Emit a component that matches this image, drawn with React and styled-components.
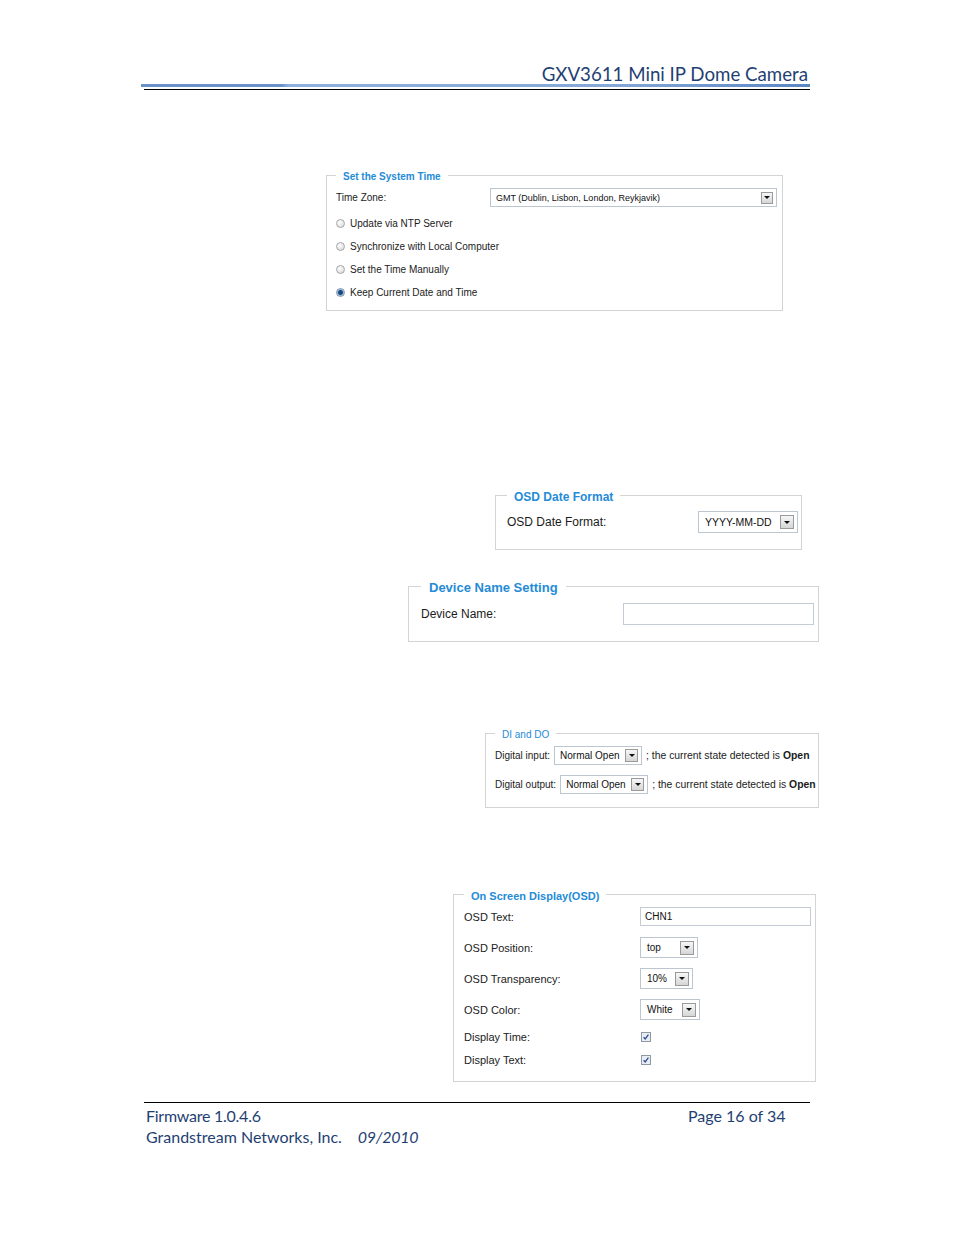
import React from 'react';
import styled, { createGlobalStyle, css } from 'styled-components';

const GlobalStyle = createGlobalStyle`
  html, body {
    margin: 0;
    padding: 0;
    background: #fff;
  }
  body {
    font-family: "Liberation Sans", Arial, sans-serif;
    color: #1b1b1b;
  }
`;

const Page = styled.div`
  width: 954px;
  height: 1235px;
  overflow: hidden;
  background: #fff;
`;

/* ---------- document header / footer ---------- */

const Header = styled.header`
  padding-top: 65px;
`;

const Title = styled.div`
  width: 808px;
  text-align: right;
  font-family: Lato, "Open Sans", sans-serif;
  font-size: 18.7px;
  line-height: 19px;
  color: #1f3f73;
`;

const BlueRule = styled.div`
  margin-left: 141px;
  width: 669px;
  height: 3px;
  background: linear-gradient(90deg, #6b92c7 0%, #6b92c7 21%, #8fb0da 22%, #86a8d6 70%, #5a86c2 100%);
`;

const BlackRule = styled.div`
  margin: 2px 0 0 144px;
  width: 666px;
  height: 1px;
  background: #000;
`;

const Footer = styled.footer`
  box-sizing: border-box;
  margin: 20px 0 0 144px;
  width: 666px;
  border-top: 1px solid #000;
  padding: 2px 0 0 2px;
  font-family: Lato, "Open Sans", sans-serif;
  font-size: 16px;
  line-height: 21px;
  color: #1f3f73;
`;

const FooterRow = styled.div`
  display: flex;
`;

const FooterCell = styled.span`
  width: ${p => p.$w}px;
  flex: none;
  letter-spacing: ${p => p.$ls || 0}px;
`;

const FooterDate = styled.em`
  margin-left: 16px;
  letter-spacing: -0.3px;
`;

/* ---------- settings panels ---------- */

const Panel = styled.fieldset`
  box-sizing: border-box;
  display: block;
  min-inline-size: 0;
  margin: ${p => p.$top}px 0 0 ${p => p.$left}px;
  width: ${p => p.$width}px;
  padding: 0 6px ${p => p.$padBottom}px ${p => p.$padLeft}px;
  border: 1px solid #d4d4d4;
`;

const Legend = styled.legend`
  padding: 0 ${p => p.$gap}px;
  font-size: ${p => p.$size}px;
  line-height: ${p => p.$lh}px;
  font-weight: ${p => (p.$bold ? 700 : 400)};
  color: #248bd7;

  span {
    display: inline-block;
    transform: translateY(2px);
  }
`;

const Row = styled.div`
  display: flex;
  align-items: center;
  height: ${p => p.$h}px;
  margin-top: ${p => p.$mt || 0}px;
  font-size: ${p => p.$size}px;
  white-space: nowrap;
`;

const Label = styled.span`
  flex: none;
  width: ${p => (p.$w ? `${p.$w}px` : 'auto')};
  margin-right: ${p => p.$mr || 0}px;
`;

const SelectBox = styled.div`
  box-sizing: border-box;
  flex: none;
  display: flex;
  align-items: center;
  justify-content: space-between;
  width: ${p => p.$w}px;
  height: ${p => p.$h}px;
  padding: 0 3px 0 ${p => p.$pl}px;
  border: 1px solid #bcc6d1;
  background: #fff;
  font-size: ${p => p.$size}px;
  color: #111;
`;

const ArrowButton = styled.span`
  box-sizing: border-box;
  flex: none;
  display: flex;
  align-items: center;
  justify-content: center;
  width: ${p => p.$s}px;
  height: ${p => p.$s}px;
  border: 1px solid #9a9a9a;
  background: linear-gradient(#f7f7f7, #d6d6d6);

  &::after {
    content: '';
    border-left: 3px solid transparent;
    border-right: 3px solid transparent;
    border-top: 3px solid #111;
  }
`;

const TextBox = styled.div`
  box-sizing: border-box;
  flex: none;
  display: flex;
  align-items: center;
  width: ${p => p.$w}px;
  height: ${p => p.$h}px;
  padding-left: 4px;
  border: 1px solid #c3ccd6;
  background: #fff;
  font-size: 10px;
  color: #111;
`;

const Radio = styled.span`
  box-sizing: border-box;
  flex: none;
  width: 9px;
  height: 9px;
  margin-right: 5px;
  border-radius: 50%;
  border: 1px solid #a8a8a8;
  background: radial-gradient(circle at 40% 35%, #ffffff, #d2d2d2);

  ${p =>
    p.$checked &&
    css`
      border-color: #7d97b3;
      background: radial-gradient(circle, #17497c 0 2px, #7fa2c6 2.6px, #e3ebf4 4px);
    `}
`;

const Status = styled.span`
  margin-left: 4px;
  font-size: 10.4px;

  b {
    font-weight: 700;
  }
`;

const Select = ({ w, h, pl = 5, size = 10, btn = 12, children }) => (
  <SelectBox $w={w} $h={h} $pl={pl} $size={size}>
    <span>{children}</span>
    <ArrowButton $s={btn} />
  </SelectBox>
);

const Check = () => (
  <svg width="10" height="10" viewBox="0 0 10 10" style={{ marginLeft: 1 }}>
    <rect x="0.5" y="0.5" width="9" height="9" fill="#e9edf2" stroke="#8e99a6" />
    <path d="M2.6 5.2 L4.2 7 L7.4 2.6" fill="none" stroke="#2c4f9a" strokeWidth="1.3" />
  </svg>
);

const RADIOS = [
  { label: 'Update via NTP Server' },
  { label: 'Synchronize with Local Computer' },
  { label: 'Set the Time Manually' },
  { label: 'Keep Current Date and Time', checked: true },
];

const OSD_ROWS = [
  { label: 'OSD Text:', text: 'CHN1', w: 171, h: 19 },
  { label: 'OSD Position:', select: 'top', w: 58, h: 21, pl: 6 },
  { label: 'OSD Transparency:', select: '10%', w: 53, h: 21, pl: 6 },
  { label: 'OSD Color:', select: 'White', w: 60, h: 21, pl: 6 },
];

export default function App() {
  return (
    <Page>
      <GlobalStyle />
      <Header>
        <Title>GXV3611 Mini IP Dome Camera</Title>
        <BlueRule />
        <BlackRule />
      </Header>

      <Panel $top={79} $left={326} $width={457} $padLeft={9} $padBottom={6}>
        <Legend $gap={7} $size={10} $lh={12} $bold><span>Set the System Time</span></Legend>
        <Row $h={19} $mt={7} $size={10}>
          <Label $w={154}>Time Zone:</Label>
          <Select w={287} h={19} size={9} btn={12}>GMT (Dublin, Lisbon, London, Reykjavik)</Select>
        </Row>
        <div style={{ marginTop: 5 }}>
          {RADIOS.map(r => (
            <Row key={r.label} $h={23} $size={10}>
              <Radio $checked={r.checked} />
              <Label>{r.label}</Label>
            </Row>
          ))}
        </div>
      </Panel>

      <Panel $top={177} $left={495} $width={307} $padLeft={11} $padBottom={16}>
        <Legend $gap={7} $size={12} $lh={14} $bold><span>OSD Date Format</span></Legend>
        <Row $h={22} $mt={9} $size={12}>
          <Label $w={191}>OSD Date Format:</Label>
          <Select w={100} h={22} pl={6} size={10.5} btn={14}>YYYY-MM-DD</Select>
        </Row>
      </Panel>

      <Panel $top={28} $left={408} $width={411} $padLeft={12} $padBottom={16}>
        <Legend $gap={8} $size={13} $lh={16} $bold><span>Device Name Setting</span></Legend>
        <Row $h={22} $mt={9} $size={12}>
          <Label $w={202}>Device Name:</Label>
          <TextBox $w={191} $h={22} />
        </Row>
      </Panel>

      <Panel $top={85} $left={485} $width={334} $padLeft={9} $padBottom={13}>
        <Legend $gap={7} $size={10} $lh={12}><span>DI and DO</span></Legend>
        <Row $h={19} $mt={7} $size={10}>
          <Label $mr={4}>Digital input:</Label>
          <Select w={88} h={19} pl={5} btn={13}>Normal Open</Select>
          <Status>; the current state detected is <b>Open</b></Status>
        </Row>
        <Row $h={19} $mt={10} $size={10}>
          <Label $mr={4}>Digital output:</Label>
          <Select w={88} h={19} pl={5} btn={13}>Normal Open</Select>
          <Status>; the current state detected is <b>Open</b></Status>
        </Row>
      </Panel>

      <Panel $top={80} $left={453} $width={363} $padLeft={10} $padBottom={10}>
        <Legend $gap={7} $size={11} $lh={13} $bold><span>On Screen Display(OSD)</span></Legend>
        {OSD_ROWS.map(r => (
          <Row key={r.label} $h={31} $size={11}>
            <Label $w={176}>{r.label}</Label>
            {r.text ? (
              <TextBox $w={r.w} $h={r.h}>{r.text}</TextBox>
            ) : (
              <Select w={r.w} h={r.h} pl={r.pl} btn={14}>{r.select}</Select>
            )}
          </Row>
        ))}
        <Row $h={23} $size={11}>
          <Label $w={176}>Display Time:</Label>
          <Check />
        </Row>
        <Row $h={23} $size={11}>
          <Label $w={176}>Display Text:</Label>
          <Check />
        </Row>
      </Panel>

      <Footer>
        <FooterRow>
          <FooterCell $w={542} $ls={-0.25}>Firmware 1.0.4.6</FooterCell>
          <span>Page 16 of 34</span>
        </FooterRow>
        <FooterRow>
          <span>
            Grandstream Networks, Inc.
            <FooterDate>09/2010</FooterDate>
          </span>
        </FooterRow>
      </Footer>
    </Page>
  );
}
